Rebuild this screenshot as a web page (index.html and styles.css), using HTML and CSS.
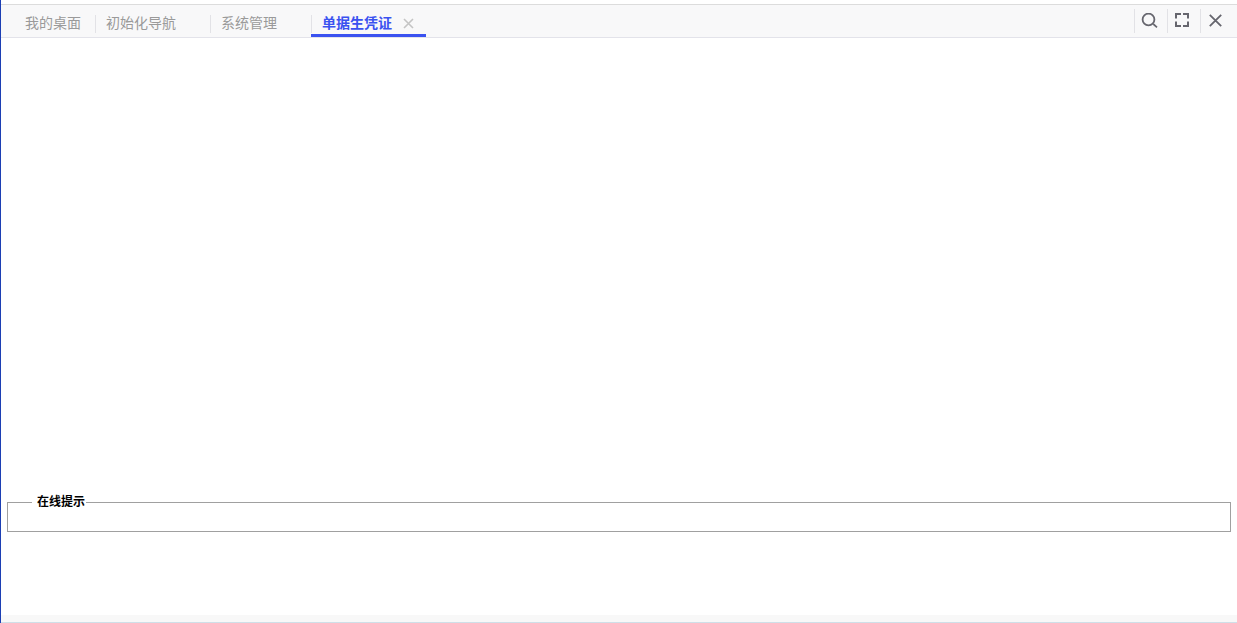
FILE: index.html
```html
<!DOCTYPE html>
<html lang="zh">
<head>
<meta charset="utf-8">
<title>单据生凭证</title>
<link rel="stylesheet" href="styles.css">
</head>
<body>
<div class="app">
  <div class="topline"></div>
  <header class="tabbar">
    <nav class="tabs">
      <a class="tab first">我的桌面</a>
      <a class="tab">初始化导航</a>
      <a class="tab">系统管理</a>
      <a class="tab active">单据生凭证
        <svg class="tab-close" width="11" height="11" viewBox="0 0 11 11"><path d="M1 1l9 9M10 1l-9 9" fill="none" stroke="#c4c4c4" stroke-width="1.6"/></svg>
      </a>
    </nav>
    <div class="tools">
      <button class="tool">
        <svg width="18" height="15" viewBox="0 0 18 15"><circle cx="7.500" cy="6.500" r="5.900" fill="none" stroke="#66666e" stroke-width="1.800"/><path d="M12.300 11l3.700 3.300" fill="none" stroke="#66666e" stroke-width="1.700"/></svg>
      </button>
      <button class="tool tool-expand">
        <svg width="14" height="14" viewBox="0 0 14 14"><path d="M1 5.500V1h5M8 1h5v4.500M13 8.500V13H8M6 13H1V8.500" fill="none" stroke="#66666e" stroke-width="2"/></svg>
      </button>
      <button class="tool">
        <svg width="13" height="13" viewBox="0 0 13 13"><path d="M.8.800l11.400 11.400M12.200.800L.8 12.200" fill="none" stroke="#66666e" stroke-width="1.800"/></svg>
      </button>
    </div>
  </header>
  <main class="content">
    <fieldset class="hint">
      <legend class="hint-title">在线提示</legend>
    </fieldset>
  </main>
  <footer class="bottom"></footer>
</div>
</body>
</html>
```
FILE: styles.css
```css
* { box-sizing: border-box; }
html, body { margin: 0; height: 100%; background: #fff; overflow: hidden; }
body { font-family: "Liberation Sans", "Noto Sans CJK SC", sans-serif; font-size: 14px; }
.app { height: 623px; display: flex; flex-direction: column; border-left: 1px solid #1c3fb4; }
.topline { height: 5px; flex: none; background: #fff; border-bottom: 1px solid #dcdcdc; }
.tabbar { height: 33px; flex: none; display: flex; justify-content: space-between; background: #f8f8f9; border-bottom: 1px solid #e3e3ea; }
.tabs { display: flex; padding-left: 9px; padding-top: 5px; }
.tab { position: relative; display: flex; align-items: flex-start; height: 27px; padding: 3px 34px 0 11px; line-height: 20px; color: #9a9a9a; white-space: nowrap; }
.tab::before { content: ""; position: absolute; left: 0; top: 5px; height: 18px; width: 1px; background: #e2e2e6; }
.tab.first { padding: 3px 4px 0 15px; margin-right: 10px; }
.tab.first::before { display: none; }
.tab.active { color: #3a52f0; font-weight: bold; padding-right: 11px; width: 115px; border-bottom: 3px solid #3a52f0; }
.tab-close { margin: 5px 0 0 11px; flex: none; }
.tools { display: flex; padding-right: 4px; }
.tool { width: 33px; height: 24px; border: 0; padding: 0 3px 2px 0; margin-top: 4px; background: none; border-left: 1px solid #e2e2e6; display: flex; align-items: center; justify-content: center; }
.tool-expand { padding-right: 5px; }
.content { flex: 1; display: flex; flex-direction: column; justify-content: flex-end; padding: 0 6px 83px 6px; }
.hint { margin: 0; height: 37px; padding: 0; border: 1px solid #a0a0a0; }
.hint-title { margin-left: 24px; padding: 0 1px 0 5px; font-size: 12px; line-height: 14px; font-weight: bold; color: #000; }
.bottom { height: 8px; flex: none; background: #f8f8f8; border-bottom: 1px solid #cfdfe8; }
```
